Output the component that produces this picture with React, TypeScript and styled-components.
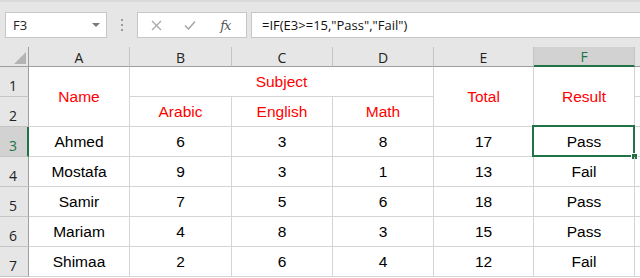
import React from 'react'
import styled, { createGlobalStyle, css } from 'styled-components'

const GREEN = '#217346'

const GlobalStyle = createGlobalStyle`
  html, body {
    margin: 0;
    padding: 0;
    background: #ffffff;
    overflow: hidden;
  }
`

const Window = styled.div`
  width: 640px;
  height: 278px;
  background: #ffffff;
  overflow: hidden;
`

const FormulaBar = styled.div`
  height: 47px;
  box-sizing: border-box;
  padding: 10px 0 0 5px;
  display: flex;
  align-items: flex-start;
  background: #e6e6e6;
  border-top: 2px solid #dadada;
`

const NameBox = styled.div`
  width: 102px;
  height: 26px;
  box-sizing: border-box;
  border: 1px solid #c6c6c6;
  background: #ffffff;
  display: flex;
  align-items: center;
  justify-content: space-between;
  padding: 0 6px 0 7px;
  font-family: 'Open Sans', 'Noto Sans', sans-serif;
  font-size: 13px;
  color: #222;
`

const DropArrow = styled.span`
  width: 0;
  height: 0;
  border-left: 4px solid transparent;
  border-right: 4px solid transparent;
  border-top: 4px solid #7a7a7a;
`

const Grip = styled.div`
  width: 30px;
  height: 26px;
  display: flex;
  flex-direction: column;
  align-items: center;
  justify-content: center;
  gap: 3px;

  span {
    width: 2px;
    height: 2px;
    background: #9a9a9a;
  }
`

const Buttons = styled.div`
  width: 110px;
  height: 26px;
  box-sizing: border-box;
  border: 1px solid #c6c6c6;
  background: #ffffff;
  display: flex;
  align-items: center;
  margin-right: 4px;
`

const IconSlot = styled.div<{ $w: number }>`
  width: ${(p) => p.$w}px;
  display: flex;
  justify-content: center;
  align-items: center;
`

const Fx = styled.span`
  font-family: 'DejaVu Serif', 'Liberation Serif', serif;
  font-style: italic;
  font-size: 13px;
  color: #555;
  letter-spacing: -1px;
`

const FormulaInput = styled.div`
  flex: 1;
  height: 26px;
  box-sizing: border-box;
  border: 1px solid #c6c6c6;
  border-right: none;
  background: #ffffff;
  display: flex;
  align-items: center;
  padding-left: 10px;
  font-family: 'Open Sans', 'Noto Sans', sans-serif;
  font-size: 13px;
  color: #111;
  white-space: pre;
`

const Sheet = styled.div`
  display: grid;
  grid-template-columns: 29px 101px 102px 101px 101px 100px 101px 1fr;
  grid-template-rows: 20px repeat(7, 30px);
`

const headerFont = css`
  font-family: 'Open Sans', 'Noto Sans', sans-serif;
  font-size: 14px;
`

const Corner = styled.div`
  background: #e6e6e6;
  border-right: 1px solid #9e9e9e;
  border-bottom: 1px solid #9e9e9e;
  box-sizing: border-box;
  position: relative;

  svg {
    position: absolute;
    right: 2px;
    bottom: 2px;
  }
`

const ColHead = styled.div<{ $active?: boolean }>`
  ${headerFont};
  box-sizing: border-box;
  background: ${(p) => (p.$active ? '#d2d2d2' : '#e6e6e6')};
  border-right: 1px solid #c4c4c4;
  border-bottom: ${(p) => (p.$active ? `2px solid ${GREEN}` : '1px solid #9e9e9e')};
  color: ${(p) => (p.$active ? GREEN : '#222')};
  display: flex;
  align-items: center;
  justify-content: center;
  padding-top: 1px;
`

const HeadFiller = styled.div`
  background: #e6e6e6;
  border-bottom: 1px solid #9e9e9e;
`

const RowHead = styled.div<{ $active?: boolean; $row: number }>`
  ${headerFont};
  grid-column: 1;
  grid-row: ${(p) => p.$row + 1};
  box-sizing: border-box;
  background: ${(p) => (p.$active ? '#d2d2d2' : '#e6e6e6')};
  border-right: ${(p) => (p.$active ? `2px solid ${GREEN}` : '1px solid #9e9e9e')};
  border-bottom: 1px solid #c4c4c4;
  color: ${(p) => (p.$active ? GREEN : '#222')};
  display: flex;
  align-items: flex-end;
  justify-content: center;
  padding-bottom: 2px;
  padding-right: ${(p) => (p.$active ? 1 : 2)}px;
  line-height: 16px;
`

const Cell = styled.div<{ $red?: boolean; $col: string; $row: string }>`
  grid-column: ${(p) => p.$col};
  grid-row: ${(p) => p.$row};
  position: relative;
  box-sizing: border-box;
  border-right: 1px solid #d4d4d4;
  border-bottom: 1px solid #d4d4d4;
  display: flex;
  align-items: center;
  justify-content: center;
  padding-top: 1px;
  font-family: 'Liberation Sans', Arial, sans-serif;
  font-size: 15.5px;
  color: ${(p) => (p.$red ? '#ff0000' : '#000000')};
`

const Filler = styled.div<{ $row: number }>`
  grid-column: 8;
  grid-row: ${(p) => p.$row + 1};
  border-bottom: 1px solid #d4d4d4;
`

const Selection = styled.div`
  position: absolute;
  left: -2px;
  top: -2px;
  right: -1px;
  bottom: -1px;
  border: 2px solid ${GREEN};
  pointer-events: none;
`

const Handle = styled.div`
  position: absolute;
  right: -5px;
  bottom: -5px;
  width: 5px;
  height: 5px;
  background: ${GREEN};
  border: 1px solid #ffffff;
`

const students = [
  { name: 'Ahmed', arabic: 6, english: 3, math: 8 },
  { name: 'Mostafa', arabic: 9, english: 3, math: 1 },
  { name: 'Samir', arabic: 7, english: 5, math: 6 },
  { name: 'Mariam', arabic: 4, english: 8, math: 3 },
  { name: 'Shimaa', arabic: 2, english: 6, math: 4 },
]

const letters = ['A', 'B', 'C', 'D', 'E', 'F']

const App = () => {
  return (
    <Window>
      <GlobalStyle />
      <FormulaBar>
        <NameBox>
          F3
          <DropArrow />
        </NameBox>
        <Grip>
          <span />
          <span />
          <span />
        </Grip>
        <Buttons>
          <IconSlot $w={38}>
            <svg width="11" height="11" viewBox="0 0 11 11">
              <path d="M1 1 L10 10 M10 1 L1 10" stroke="#a8a8a8" strokeWidth="1.3" fill="none" />
            </svg>
          </IconSlot>
          <IconSlot $w={30}>
            <svg width="12" height="10" viewBox="0 0 12 10">
              <path d="M1 5.5 L4.5 9 L11 1.5" stroke="#a8a8a8" strokeWidth="1.6" fill="none" />
            </svg>
          </IconSlot>
          <IconSlot $w={42}>
            <Fx>fx</Fx>
          </IconSlot>
        </Buttons>
        <FormulaInput>=IF(E3&gt;=15,"Pass","Fail")</FormulaInput>
      </FormulaBar>

      <Sheet>
        <Corner>
          <svg width="12" height="12" viewBox="0 0 12 12">
            <polygon points="12,0 12,12 0,12" fill="#b4b4b4" />
          </svg>
        </Corner>
        {letters.map((l) => (
          <ColHead key={l} $active={l === 'F'}>
            {l}
          </ColHead>
        ))}
        <HeadFiller />

        {[1, 2, 3, 4, 5, 6, 7].map((n) => (
          <RowHead key={n} $row={n} $active={n === 3}>
            {n}
          </RowHead>
        ))}

        <Cell $red $col="2" $row="2 / span 2">Name</Cell>
        <Cell $red $col="3 / span 3" $row="2">Subject</Cell>
        <Cell $red $col="3" $row="3">Arabic</Cell>
        <Cell $red $col="4" $row="3">English</Cell>
        <Cell $red $col="5" $row="3">Math</Cell>
        <Cell $red $col="6" $row="2 / span 2">Total</Cell>
        <Cell $red $col="7" $row="2 / span 2">Result</Cell>

        {students.map((s, i) => {
          const row = String(i + 4)
          const total = s.arabic + s.english + s.math
          return (
            <React.Fragment key={s.name}>
              <Cell $col="2" $row={row}>{s.name}</Cell>
              <Cell $col="3" $row={row}>{s.arabic}</Cell>
              <Cell $col="4" $row={row}>{s.english}</Cell>
              <Cell $col="5" $row={row}>{s.math}</Cell>
              <Cell $col="6" $row={row}>{total}</Cell>
              <Cell $col="7" $row={row}>
                {total >= 15 ? 'Pass' : 'Fail'}
                {i === 0 && (
                  <Selection>
                    <Handle />
                  </Selection>
                )}
              </Cell>
            </React.Fragment>
          )
        })}

        {[1, 2, 3, 4, 5, 6, 7].map((n) => (
          <Filler key={n} $row={n} />
        ))}
      </Sheet>
    </Window>
  )
}

export default App
